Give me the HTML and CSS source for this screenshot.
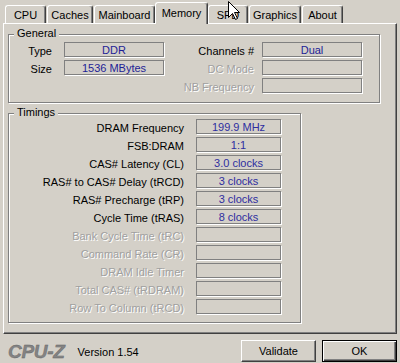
FILE: index.html
```html
<!DOCTYPE html>
<html>
<head>
<meta charset="utf-8">
<link rel="stylesheet" href="styles.css">
</head>
<body>
<div class="app">
  <div class="tabs">
    <div class="tab w-cpu">CPU</div>
    <div class="tab w-caches">Caches</div>
    <div class="tab w-main">Mainboard</div>
    <div class="tab active w-mem">Memory</div>
    <div class="tab w-spd">SPD</div>
    <div class="tab w-gfx">Graphics</div>
    <div class="tab w-about">About</div>
  </div>
  <div class="panel">
    <div class="group general">
      <span class="caption">General</span>
      <div class="ggrid">
        <span class="lbl c1">Type</span><span class="field">DDR</span>
        <span class="lbl c3">Channels #</span><span class="field">Dual</span>
        <span class="lbl c1">Size</span><span class="field">1536 MBytes</span>
        <span class="lbl c3 off">DC Mode</span><span class="field"></span>
        <span class="lbl c1"></span><span></span>
        <span class="lbl c3 off">NB Frequency</span><span class="field"></span>
      </div>
    </div>
    <div class="group timings">
      <span class="caption">Timings</span>
      <div class="tgrid">
        <span class="lbl">DRAM Frequency</span><span class="field val2">199.9 MHz</span>
        <span class="lbl">FSB:DRAM</span><span class="field val2">1:1</span>
        <span class="lbl">CAS# Latency (CL)</span><span class="field val2">3.0 clocks</span>
        <span class="lbl">RAS# to CAS# Delay (tRCD)</span><span class="field val2">3 clocks</span>
        <span class="lbl">RAS# Precharge (tRP)</span><span class="field val2">3 clocks</span>
        <span class="lbl">Cycle Time (tRAS)</span><span class="field val2">8 clocks</span>
        <span class="lbl off">Bank Cycle Time (tRC)</span><span class="field"></span>
        <span class="lbl off">Command Rate (CR)</span><span class="field"></span>
        <span class="lbl off">DRAM Idle Timer</span><span class="field"></span>
        <span class="lbl off">Total CAS# (tRDRAM)</span><span class="field"></span>
        <span class="lbl off">Row To Column (tRCD)</span><span class="field"></span>
      </div>
    </div>
  </div>
  <div class="footer">
    <span class="logo">CPU-Z</span>
    <span class="version">Version 1.54</span>
    <button class="btn validate">Validate</button>
    <button class="btn default">OK</button>
  </div>
</div>
<svg class="cursor" width="13" height="20" viewBox="0 0 13 20">
  <path d="M0.5 0.5 V16.5 L4.5 12.5 L7.5 18.5 L9.5 17.5 L6.5 11.5 H11.5 Z" fill="#fff" stroke="#000" stroke-width="1" stroke-linejoin="miter"/>
</svg>
</body>
</html>
```
FILE: styles.css
```css
html, body {
  margin: 0;
  padding: 0;
}
body {
  width: 400px;
  height: 363px;
  background: #d4d0c8;
  font: 11px "Liberation Sans", Arial, sans-serif;
  color: #000;
  position: relative;
  overflow: hidden;
}
.tabs {
  display: flex;
  align-items: flex-end;
  height: 23px;
  padding-left: 5px;
  box-sizing: border-box;
}
.tab {
  height: 18px;
  box-sizing: border-box;
  border-top: 1px solid #fff;
  border-left: 1px solid #fff;
  border-right: 1px solid #404040;
  box-shadow: inset -1px 0 #808080;
  border-radius: 3px 3px 0 0;
  margin-right: 1px;
  text-align: center;
  line-height: 16px;
  padding-top: 1px;
  white-space: nowrap;
}
.tab.active {
  height: 22px;
  margin: 0 0 -1px -1px;
  position: relative;
  z-index: 1;
  background: #d4d0c8;
  line-height: 17px;
  padding-top: 2px;
}
.w-cpu { width: 41px; }
.w-caches { width: 46px; }
.w-main { width: 61px; }
.w-mem { width: 53px; }
.w-spd { width: 40px; }
.w-gfx { width: 52px; }
.w-about { width: 41px; }

.panel {
  margin-left: 3px;
  width: 394px;
  height: 311px;
  box-sizing: border-box;
  border-top: 1px solid #fff;
  border-left: 1px solid #fff;
  border-right: 1px solid #404040;
  border-bottom: 1px solid #404040;
  box-shadow: inset -1px -1px #808080;
  padding: 10px 0 0 4px;
}
.group {
  position: relative;
  border: 1px solid #808080;
  box-shadow: inset 1px 1px #fff, 1px 1px #fff;
  box-sizing: border-box;
}
.caption {
  position: absolute;
  top: -8px;
  left: 5px;
  padding: 0 3px;
  line-height: 13px;
  background: #d4d0c8;
}
.general {
  width: 372px;
  height: 69px;
  padding-top: 7px;
}
.timings {
  width: 293px;
  height: 210px;
  margin-top: 10px;
  padding-top: 5px;
}
.ggrid {
  display: grid;
  grid-template-columns: 55px 101px 97px 101px;
  grid-auto-rows: 16px;
  row-gap: 2px;
}
.tgrid {
  display: grid;
  grid-template-columns: 187px 86px;
  grid-auto-rows: 16px;
  row-gap: 2px;
}
.lbl {
  text-align: right;
  line-height: 16px;
  white-space: nowrap;
  padding-top: 1px;
  box-sizing: border-box;
}
.ggrid .c1 { padding-right: 12px; }
.ggrid .c3 { padding-right: 8px; }
.tgrid .lbl { padding-right: 12px; }
.off {
  color: #a0a0a0;
  text-shadow: 1px 1px 0 #fff;
}
.field {
  height: 15px;
  box-sizing: border-box;
  border: 1px solid #808080;
  box-shadow: 1px 1px 0 #fff;
  text-align: center;
  line-height: 14px;
  color: #1e1e96;
  white-space: nowrap;
}
.ggrid .field { width: 100px; }
.tgrid .field { width: 85px; }
.val2 { color: #2e2ea0; }

.footer {
  display: flex;
  align-items: flex-start;
  height: 29px;
  box-sizing: border-box;
  padding: 0 3px 0 8px;
}
.logo {
  font-weight: bold;
  font-style: italic;
  font-size: 19px;
  line-height: 19px;
  margin-top: 8px;
  color: #838383;
  -webkit-text-stroke: 0.4px #666;
  letter-spacing: -0.3px;
}
.version {
  line-height: 13px;
  margin-top: 12px;
  margin-left: 13px;
}
.btn {
  width: 75px;
  height: 22px;
  margin-top: 6px;
  box-sizing: border-box;
  padding: 0;
  background: #d4d0c8;
  font: inherit;
  color: #000;
  border-top: 1px solid #fff;
  border-left: 1px solid #fff;
  border-right: 1px solid #404040;
  border-bottom: 1px solid #404040;
  box-shadow: inset -1px -1px #808080;
  border-radius: 0;
}
.validate {
  margin-left: auto;
}
.btn.default {
  margin-left: 6px;
  border: 1px solid #000;
  box-shadow: inset 1px 1px #fff, inset -1px -1px #404040, inset -2px -2px #808080;
}
.cursor {
  position: absolute;
  left: 228px;
  top: 1px;
}
```
